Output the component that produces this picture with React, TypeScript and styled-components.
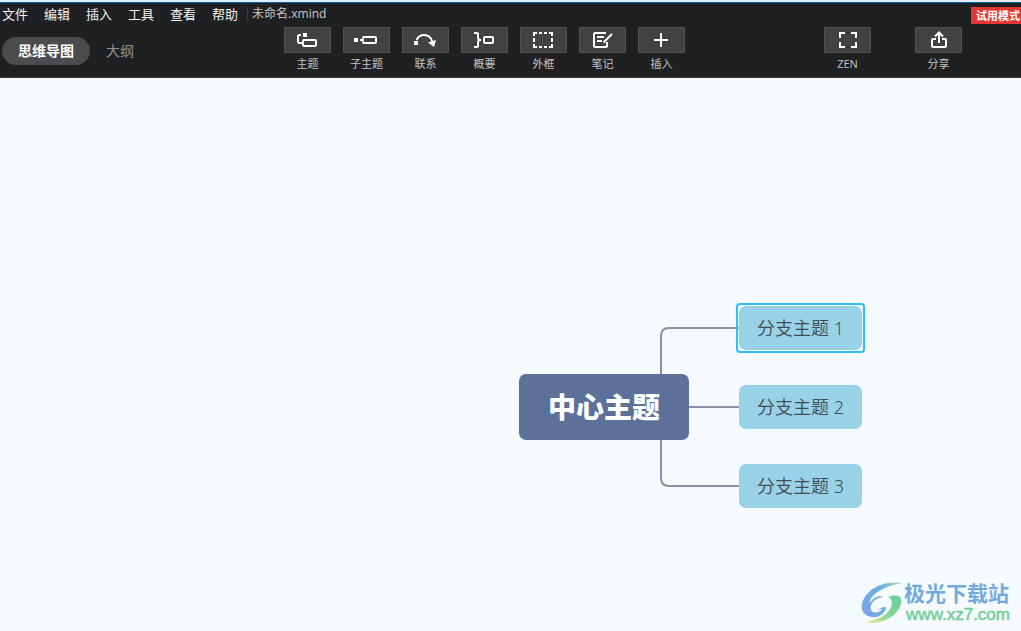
import React from "react";
import styled, { createGlobalStyle } from "styled-components";

const GlobalStyle = createGlobalStyle`
  * { box-sizing: border-box; }
  html, body { margin: 0; height: 100%; }
  #root { min-height: 100%; display: flex; flex-direction: column; }
  body {
    background: #f5faff;
    font-family: "Open Sans", "Noto Sans CJK SC", sans-serif;
  }
  button { font-family: inherit; border: 0; padding: 0; background: none; cursor: pointer; }
`;

const Header = styled.header`
  background: #1e2022;
  border-top: 2px solid #e4edf6;
  border-bottom: 1px solid #39383b;
  flex: none;
`;

const MenuBar = styled.nav`
  display: flex;
  align-items: center;
  height: 22px;
  padding-left: 2px;
  border-top: 1px solid #0563b4;
`;

const MenuItem = styled.button`
  margin-right: 16px;
  color: #f2f2f2;
  font-size: 13px;
  line-height: 20px;
  white-space: nowrap;
`;

const FileName = styled.span`
  margin-left: -7px;
  padding-left: 4px;
  border-left: 1px solid #37393b;
  color: #c8c8c8;
  font-size: 12px;
  line-height: 14px;
  white-space: nowrap;
`;

const TrialBadge = styled.span`
  align-self: flex-end;
  margin-left: auto;
  padding: 0 1px 0 5px;
  background: #e53835;
  color: #fff;
  font-size: 11px;
  font-weight: 700;
  line-height: 17px;
  white-space: nowrap;
`;

const ToolBar = styled.div`
  display: flex;
  align-items: flex-start;
  height: 53px;
  padding: 3px 59px 0 2px;
`;

const Tabs = styled.div`
  display: flex;
  flex: 0 0 282px;
  gap: 16px;
  padding-top: 10px;
`;

const Tab = styled.button<{ $active?: boolean }>`
  height: 28px;
  padding: ${(p) => (p.$active ? "0 16px" : "0")};
  border-radius: 14px;
  background: ${(p) => (p.$active ? "#4b4c4e" : "transparent")};
  color: ${(p) => (p.$active ? "#fff" : "#909193")};
  font-size: 14px;
  font-weight: ${(p) => (p.$active ? 700 : 400)};
  line-height: 28px;
`;

const ToolGroup = styled.div<{ $gap: number; $end?: boolean }>`
  display: flex;
  gap: ${(p) => p.$gap}px;
  margin-left: ${(p) => (p.$end ? "auto" : "0")};
`;

const ToolButton = styled.button`
  width: 47px;
  color: #c4c4c4;
  font-size: 11px;
  line-height: 22px;
  text-align: center;
`;

const ToolFace = styled.span`
  display: flex;
  align-items: center;
  justify-content: center;
  height: 26px;
  border: 1px solid #505153;
  background: #414244;
`;

const Canvas = styled.main`
  position: relative;
  flex: 1;
  min-height: 480px;
  overflow: hidden;
`;

const Connectors = styled.svg`
  position: absolute;
  left: 0;
  top: 0;
`;

const Node = styled.div<{ $x: number; $y: number }>`
  position: absolute;
  left: ${(p) => p.$x}px;
  top: ${(p) => p.$y}px;
  padding-bottom: 2px;
  display: flex;
  align-items: center;
  justify-content: center;
  white-space: pre;
`;

const CentralTopic = styled(Node)`
  width: 170px;
  height: 66px;
  border-radius: 7px;
  background: #5b7199;
  color: #fff;
  font-size: 28px;
  font-weight: 900;
`;

const BranchTopic = styled(Node)`
  width: 123px;
  height: 44px;
  border-radius: 7px;
  background: #97d2e7;
  color: #434b54;
  font-family: "Noto Sans", "Noto Sans CJK SC", sans-serif;
  font-size: 18px;
  font-weight: 350;
`;

const Selection = styled.div<{ $x: number; $y: number }>`
  position: absolute;
  left: ${(p) => p.$x}px;
  top: ${(p) => p.$y}px;
  width: 129px;
  height: 50px;
  border: 2px solid #2ebdff;
  border-radius: 4px;
`;

const Watermark = styled.aside`
  position: absolute;
  right: 11px;
  bottom: 6px;
  display: flex;
  align-items: center;
`;

const SiteName = styled.div`
  color: #74a9de;
  font-size: 21px;
  font-weight: 700;
  line-height: 24px;
`;

const SiteUrl = styled.div`
  padding-left: 2px;
  color: #72cf95;
  font-family: "Liberation Sans", sans-serif;
  font-size: 17px;
  -webkit-text-stroke: 0.5px #72cf95;
  line-height: 20px;
`;

const Icon = ({ children }: { children: React.ReactNode }) => (
  <svg
    width="23"
    height="18"
    viewBox="0 0 23 18"
    fill="none"
    stroke="#fff"
    strokeWidth="2"
    overflow="visible"
    aria-hidden="true"
  >
    {children}
  </svg>
);

const tools = [
  {
    label: "主题",
    icon: (
      <>
        <path d="M5 4H3.500Q2 4 2 5.500V10.500Q2 12 3.500 12H6" />
        <rect x="7" y="2" width="4" height="4" fill="#fff" stroke="none" />
        <rect x="7" y="9" width="13" height="6" rx="1" />
      </>
    ),
  },
  {
    label: "子主题",
    icon: (
      <>
        <rect x="-1" y="7" width="4" height="4" fill="#fff" stroke="none" />
        <path d="M5 9H8" />
        <rect x="8" y="6" width="13" height="6" rx="1" />
      </>
    ),
  },
  {
    label: "联系",
    icon: (
      <>
        <rect x="0" y="10" width="4" height="4" fill="#fff" stroke="none" />
        <path d="M2.500 9Q5 4 10 4Q16.500 4 18.500 11" />
        <path d="M14 11.500L22 9L20 16Z" fill="#fff" stroke="none" />
      </>
    ),
  },
  {
    label: "概要",
    icon: (
      <>
        <path d="M1 2H4Q5 2 5 3V7Q5 9 8 9Q5 9 5 11V15Q5 16 4 16H1" />
        <rect x="11" y="6" width="9" height="6" rx="1" />
      </>
    ),
  },
  {
    label: "外框",
    icon: <path d="M2 5V2H5M7 2H10M12 2H15M17 2H20V5M20 7V11M20 13V16H17M15 16H12M10 16H7M5 16H2V13M2 11V7" />,
  },
  {
    label: "笔记",
    icon: (
      <>
        <path d="M15 2H4Q3 2 3 3V15Q3 16 4 16H15Q16 16 16 15V11" />
        <path d="M6 6H13M6 10H11M12.500 11.500L21 3" />
      </>
    ),
  },
  { label: "插入", icon: <path d="M11 2V16M4 9H18" /> },
];

const actions = [
  { label: "ZEN", icon: <path d="M4 7V2H9M15 2H20V7M20 11V16H15M9 16H4V11" /> },
  {
    label: "分享",
    icon: (
      <>
        <path d="M9 8H6Q5 8 5 9V15Q5 16 6 16H18Q19 16 19 15V9Q19 8 18 8H15" />
        <path d="M12 12V2M8 5.500L12 1.500L16 5.500" />
      </>
    ),
  },
];

const branches = [
  { label: "分支主题 1", y: 228, selected: true },
  { label: "分支主题 2", y: 307 },
  { label: "分支主题 3", y: 386 },
];

const Tool = ({ label, icon }: { label: string; icon: React.ReactNode }) => (
  <ToolButton type="button">
    <ToolFace>
      <Icon>{icon}</Icon>
    </ToolFace>
    {label}
  </ToolButton>
);

const SiteLogo = () => (
  <svg width="44" height="44" viewBox="0 0 44 44" aria-hidden="true">
    <defs>
      <linearGradient id="sky" x1="0" y1="0.8" x2="1" y2="0">
        <stop offset="0" stopColor="#78a6e6" />
        <stop offset="0.6" stopColor="#6db0e2" />
        <stop offset="1" stopColor="#bfe3a0" />
      </linearGradient>
      <linearGradient id="leaf" x1="0" y1="1" x2="1" y2="0">
        <stop offset="0" stopColor="#e3e98a" />
        <stop offset="0.5" stopColor="#7fd796" />
        <stop offset="1" stopColor="#69cfa0" />
      </linearGradient>
    </defs>
    <path
      fill="url(#sky)"
      d="M44 2C30 0 17 3 9 11C1 18 0 28 4 32C7 36 15 38 21 34C24 32 26 29 26 26C23 26 20 27 17 29C19 28 21 28 22 28C20 32 13 33 11 29C9 24 14 17 23 16C19 14 13 17 10 22C9 14 25 4 44 2Z"
    />
    <path fill="url(#leaf)" d="M28 16C33 14 37 14 40 16C44 21 39 31 31 36C24 41 14 43 6 41C18 39 29 33 31 26C33 20 31 17 28 16Z" />
  </svg>
);

export default function App() {
  return (
    <>
      <GlobalStyle />
      <Header>
        <MenuBar>
          {["文件", "编辑", "插入", "工具", "查看", "帮助"].map((m) => (
            <MenuItem key={m} type="button">
              {m}
            </MenuItem>
          ))}
          <FileName>未命名.xmind</FileName>
          <TrialBadge>试用模式</TrialBadge>
        </MenuBar>
        <ToolBar>
          <Tabs>
            <Tab type="button" $active>
              思维导图
            </Tab>
            <Tab type="button">大纲</Tab>
          </Tabs>
          <ToolGroup $gap={12}>
            {tools.map((t) => (
              <Tool key={t.label} {...t} />
            ))}
          </ToolGroup>
          <ToolGroup $gap={44} $end>
            {actions.map((t) => (
              <Tool key={t.label} {...t} />
            ))}
          </ToolGroup>
        </ToolBar>
      </Header>
      <Canvas>
        <Connectors width="900" height="480" fill="none" stroke="#8b90a6" strokeWidth="2" aria-hidden="true">
          <path d="M661 300V258Q661 250 669 250H740" />
          <path d="M680 329H740" />
          <path d="M661 358V400Q661 408 669 408H740" />
        </Connectors>
        <CentralTopic $x={519} $y={296}>
          中心主题
        </CentralTopic>
        {branches.map((b) => (
          <React.Fragment key={b.label}>
            <BranchTopic $x={739} $y={b.y}>
              {b.label}
            </BranchTopic>
            {b.selected && <Selection $x={736} $y={b.y - 3} />}
          </React.Fragment>
        ))}
        <Watermark>
          <SiteLogo />
          <div>
            <SiteName>极光下载站</SiteName>
            <SiteUrl>www.xz7.com</SiteUrl>
          </div>
        </Watermark>
      </Canvas>
    </>
  );
}
